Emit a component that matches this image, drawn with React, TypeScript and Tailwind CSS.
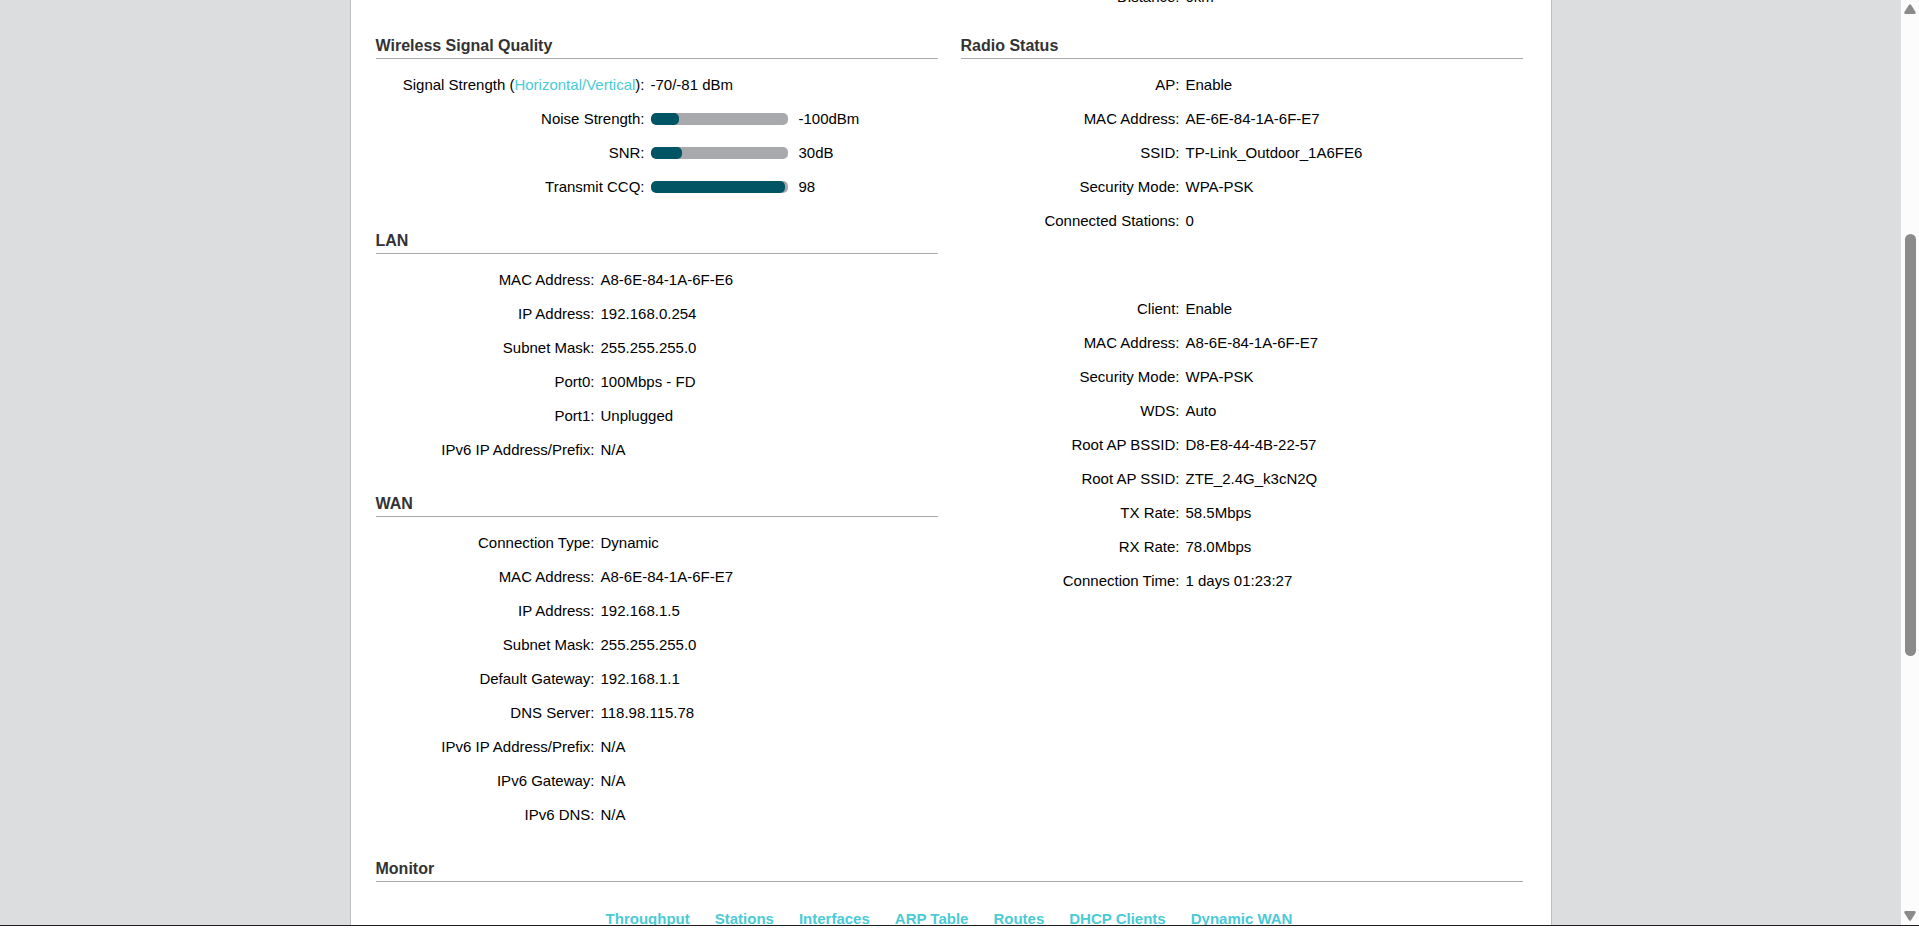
import React from "react";

type Row = { label: React.ReactNode; value: React.ReactNode };

const signal: Row[] = [
  {
    label: (
      <>
        Signal Strength (
        <a href="#polarization" className="text-[#4acbd6]">
          Horizontal/Vertical
        </a>
        ):
      </>
    ),
    value: "-70/-81 dBm",
  },
  { label: "Noise Strength:", value: <Meter label="Noise Strength" percent={21} text="-100dBm" /> },
  { label: "SNR:", value: <Meter label="SNR" percent={23} text="30dB" /> },
  { label: "Transmit CCQ:", value: <Meter label="Transmit CCQ" percent={98} text="98" /> },
];

const lan: Row[] = [
  { label: "MAC Address:", value: "A8-6E-84-1A-6F-E6" },
  { label: "IP Address:", value: "192.168.0.254" },
  { label: "Subnet Mask:", value: "255.255.255.0" },
  { label: "Port0:", value: "100Mbps - FD" },
  { label: "Port1:", value: "Unplugged" },
  { label: "IPv6 IP Address/Prefix:", value: "N/A" },
];

const wan: Row[] = [
  { label: "Connection Type:", value: "Dynamic" },
  { label: "MAC Address:", value: "A8-6E-84-1A-6F-E7" },
  { label: "IP Address:", value: "192.168.1.5" },
  { label: "Subnet Mask:", value: "255.255.255.0" },
  { label: "Default Gateway:", value: "192.168.1.1" },
  { label: "DNS Server:", value: "118.98.115.78" },
  { label: "IPv6 IP Address/Prefix:", value: "N/A" },
  { label: "IPv6 Gateway:", value: "N/A" },
  { label: "IPv6 DNS:", value: "N/A" },
];

const accessPoint: Row[] = [
  { label: "AP:", value: "Enable" },
  { label: "MAC Address:", value: "AE-6E-84-1A-6F-E7" },
  { label: "SSID:", value: "TP-Link_Outdoor_1A6FE6" },
  { label: "Security Mode:", value: "WPA-PSK" },
  { label: "Connected Stations:", value: "0" },
];

const client: Row[] = [
  { label: "Client:", value: "Enable" },
  { label: "MAC Address:", value: "A8-6E-84-1A-6F-E7" },
  { label: "Security Mode:", value: "WPA-PSK" },
  { label: "WDS:", value: "Auto" },
  { label: "Root AP BSSID:", value: "D8-E8-44-4B-22-57" },
  { label: "Root AP SSID:", value: "ZTE_2.4G_k3cN2Q" },
  { label: "TX Rate:", value: "58.5Mbps" },
  { label: "RX Rate:", value: "78.0Mbps" },
  { label: "Connection Time:", value: "1 days 01:23:27" },
];

const monitors = ["Throughput", "Stations", "Interfaces", "ARP Table", "Routes", "DHCP Clients", "Dynamic WAN"];

function Meter({ label, percent, text }: { label: string; percent: number; text: string }) {
  return (
    <span className="flex items-center gap-[11px]">
      <span
        role="meter"
        aria-label={label}
        aria-valuemin={0}
        aria-valuemax={100}
        aria-valuenow={percent}
        className="block h-3 w-[137px] overflow-hidden rounded-[5px] bg-[#a7a9ac]"
      >
        <span className="block h-full rounded-[5px] bg-[#005464]" style={{ width: `${percent}%` }} />
      </span>
      {text}
    </span>
  );
}

function Rows({ rows, wide = false }: { rows: Row[]; wide?: boolean }) {
  return (
    <dl>
      {rows.map((row, i) => (
        <div key={i} className="flex h-[34px] items-center gap-1.5">
          <dt className={`shrink-0 text-right ${wide ? "w-[269px]" : "w-[219px]"}`}>{row.label}</dt>
          <dd>{row.value}</dd>
        </div>
      ))}
    </dl>
  );
}

function Section({ title, children }: { title: string; children: React.ReactNode }) {
  return (
    <section>
      <h2 className="mb-[9px] border-b border-[#a7a9ac] py-0.5 text-base leading-5 font-bold text-[#333]">{title}</h2>
      {children}
    </section>
  );
}

function Scrollbar() {
  return (
    <div aria-hidden="true" className="flex w-[18px] shrink-0 flex-col items-center bg-[#fcfcfc] py-1">
      <svg width="12" height="10" viewBox="0 0 12 10" className="fill-[#8b8b8b]">
        <path d="M5 .8Q6-.4 7 .8L11.6 8Q12 10 10.5 10h-9Q0 10 .4 8Z" />
      </svg>
      <div className="flex w-full grow flex-col items-center">
        <div className="grow-[220]" />
        <div className="w-[11px] grow-[422] rounded-full bg-[#8b8b8b]" />
        <div className="grow-[255]" />
      </div>
      <svg width="12" height="10" viewBox="0 0 12 10" className="fill-[#8b8b8b]">
        <path d="M5 9.2Q6 10.4 7 9.2L11.6 2Q12 0 10.5 0h-9Q0 0 .4 2Z" />
      </svg>
    </div>
  );
}

export default function App() {
  return (
    <div className="flex h-screen flex-col bg-white font-['Liberation_Sans',Arial,sans-serif] text-[15px] leading-5 text-black">
      <div className="flex min-h-0 grow border-b border-[#231f20]">
        <div className="min-w-0 grow overflow-hidden bg-[#dcddde]">
          <main className="mx-auto min-h-full w-full max-w-[1202px] border-x border-[#bcbec0] bg-white pr-7 pl-[25px]">
            <div className="-mt-5 mb-5 grid grid-cols-2 gap-x-[23px]">
              <div className="col-start-2">
                <Rows rows={[{ label: "Distance:", value: "0km" }]} />
              </div>
            </div>
            <div className="grid grid-cols-2 gap-x-[23px]">
              <div className="flex flex-col gap-[25px]">
                <Section title="Wireless Signal Quality">
                  <Rows rows={signal} wide />
                </Section>
                <Section title="LAN">
                  <Rows rows={lan} />
                </Section>
                <Section title="WAN">
                  <Rows rows={wan} />
                </Section>
              </div>
              <Section title="Radio Status">
                <div className="flex flex-col gap-[54px]">
                  <Rows rows={accessPoint} />
                  <Rows rows={client} />
                </div>
              </Section>
            </div>
            <div className="mt-[25px]">
              <Section title="Monitor">
                <nav className="flex justify-center gap-[25px] pt-[18px] pb-8 font-bold text-[#4acbd6]">
                  {monitors.map((name) => (
                    <a key={name} href="#monitor">
                      {name}
                    </a>
                  ))}
                </nav>
              </Section>
            </div>
          </main>
        </div>
        <Scrollbar />
      </div>
      <div className="h-0.5 shrink-0" />
    </div>
  );
}
